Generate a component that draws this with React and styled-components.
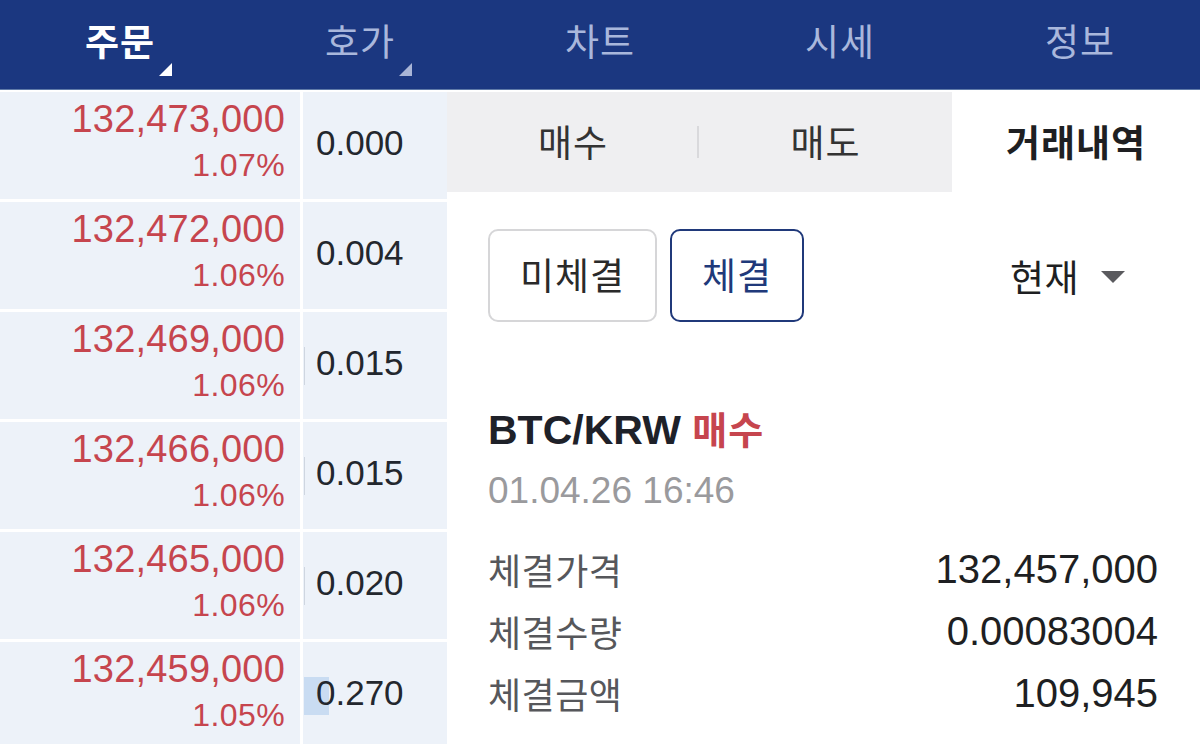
import React from "react"
import styled, { createGlobalStyle } from "styled-components"

const GlobalStyle = createGlobalStyle`
  html, body {
    margin: 0;
    padding: 0;
    background: #fff;
  }
  body {
    font-family: "Liberation Sans", "Noto Sans CJK KR", sans-serif;
    -webkit-font-smoothing: antialiased;
  }
`

const Page = styled.div`
  width: 1200px;
  height: 744px;
  overflow: hidden;
  display: flex;
  flex-direction: column;
  background: #fff;
`

const Nav = styled.nav`
  height: 89px;
  flex-shrink: 0;
  display: grid;
  grid-template-columns: repeat(5, 1fr);
  background: #1b3780;
  border-bottom: 1px solid #5f7aa8;
`

const NavItem = styled.div`
  position: relative;
  display: flex;
  align-items: center;
  justify-content: center;
  padding-bottom: 9px;
  font-size: 37px;
  font-weight: ${({ active }) => (active ? 700 : 400)};
  color: ${({ active }) => (active ? "#ffffff" : "#a9b7dc")};
  letter-spacing: 1px;
`

const NavLabel = styled.span`
  position: relative;
`

const Corner = styled.span`
  position: absolute;
  right: -17px;
  bottom: -9px;
  width: 0;
  height: 0;
  border-left: 13px solid transparent;
  border-bottom: 13px solid ${({ active }) => (active ? "#ffffff" : "#a9b5d6")};
`

const Body = styled.div`
  flex: 1;
  display: flex;
  padding-top: 2px;
`

const OrderBook = styled.div`
  width: 447px;
  flex-shrink: 0;
  display: flex;
  flex-direction: column;
  gap: 3px;
`

const BookRow = styled.div`
  height: 107px;
  flex-shrink: 0;
  display: grid;
  grid-template-columns: 300px 144px;
  gap: 3px;
`

const PriceCell = styled.div`
  background: #edf2f9;
  display: flex;
  flex-direction: column;
  align-items: flex-end;
  padding: 7px 15px 0 0;
  color: #c6454e;
`

const Price = styled.div`
  font-size: 38px;
  line-height: 40px;
  letter-spacing: 0.2px;
`

const Rate = styled.div`
  margin-top: 8px;
  font-size: 32px;
  line-height: 36px;
  letter-spacing: 0.4px;
`

const QtyCell = styled.div`
  position: relative;
  background: #edf2f9;
  display: flex;
  align-items: center;
  padding: 0 0 6px 13px;
  font-size: 35px;
  color: #23272e;
`

const DepthBar = styled.span`
  position: absolute;
  left: 1px;
  top: 50%;
  height: 38px;
  transform: translateY(-50%);
  background: ${({ big }) => (big ? "#c9dcf2" : "#cfd6e0")};
`

const QtyText = styled.span`
  position: relative;
`

const Panel = styled.div`
  flex: 1;
  display: flex;
  flex-direction: column;
`

const Tabs = styled.div`
  height: 100px;
  display: grid;
  grid-template-columns: 252px 253px 1fr;
  background: #efeff1;
`

const Tab = styled.div`
  position: relative;
  display: flex;
  align-items: center;
  justify-content: center;
  padding-bottom: 2px;
  font-size: 37px;
  letter-spacing: 1px;
  font-weight: ${({ active }) => (active ? 700 : 400)};
  color: ${({ active }) => (active ? "#1e1f22" : "#333")};
  background: ${({ active }) => (active ? "#ffffff" : "transparent")};
`

const TabDivider = styled.span`
  position: absolute;
  right: 0;
  top: 34px;
  width: 2px;
  height: 32px;
  background: #d9d9dc;
`

const Content = styled.div`
  padding: 0 42px 0 41px;
  display: flex;
  flex-direction: column;
`

const FilterRow = styled.div`
  margin-top: 37px;
  display: flex;
  align-items: center;
  gap: 13px;
`

const FilterButton = styled.div`
  box-sizing: border-box;
  height: 93px;
  width: ${({ w }) => w}px;
  display: flex;
  align-items: center;
  justify-content: center;
  padding-bottom: 3px;
  border: 2px solid ${({ active }) => (active ? "#20397a" : "#d6d6d8")};
  border-radius: 10px;
  font-size: 37px;
  letter-spacing: 1px;
  color: ${({ active }) => (active ? "#20397a" : "#2a2a2a")};
`

const Period = styled.div`
  margin-left: auto;
  margin-right: 33px;
  display: flex;
  align-items: center;
  gap: 22px;
  font-size: 37px;
  letter-spacing: 0.5px;
  color: #1e1f22;
`

const Caret = styled.span`
  width: 0;
  height: 0;
  margin-top: 2px;
  border-left: 12px solid transparent;
  border-right: 12px solid transparent;
  border-top: 12px solid #5a5a5e;
`

const TradeTitle = styled.div`
  margin-top: 85px;
  font-size: 41px;
  line-height: 46px;
  font-weight: 700;
  color: #1e2129;
`

const Side = styled.span`
  color: #c6454e;
  font-size: 38px;
  letter-spacing: 1px;
`

const TradeTime = styled.div`
  margin-top: 15px;
  font-size: 37px;
  line-height: 44px;
  color: #9a9a9d;
`

const DetailList = styled.div`
  margin-top: 25px;
  display: flex;
  flex-direction: column;
`

const DetailRow = styled.div`
  height: 62px;
  display: flex;
  align-items: center;
  justify-content: space-between;
`

const DetailLabel = styled.span`
  font-size: 36px;
  color: #56575b;
  letter-spacing: 0.5px;
`

const DetailValue = styled.span`
  font-size: 40px;
  color: #1e1f22;
`

const navItems = [
  { label: "주문", active: true, corner: true },
  { label: "호가", corner: true },
  { label: "차트" },
  { label: "시세" },
  { label: "정보" },
]

const book = [
  { price: "132,473,000", rate: "1.07%", qty: "0.000", bar: 0 },
  { price: "132,472,000", rate: "1.06%", qty: "0.004", bar: 0 },
  { price: "132,469,000", rate: "1.06%", qty: "0.015", bar: 1 },
  { price: "132,466,000", rate: "1.06%", qty: "0.015", bar: 1 },
  { price: "132,465,000", rate: "1.06%", qty: "0.020", bar: 1 },
  { price: "132,459,000", rate: "1.05%", qty: "0.270", bar: 25, big: true },
]

const details = [
  { label: "체결가격", value: "132,457,000" },
  { label: "체결수량", value: "0.00083004" },
  { label: "체결금액", value: "109,945" },
]

const App = () => {
  return (
    <Page>
      <GlobalStyle />
      <Nav>
        {navItems.map((item) => (
          <NavItem key={item.label} active={item.active}>
            <NavLabel>
              {item.label}
              {item.corner && <Corner active={item.active} />}
            </NavLabel>
          </NavItem>
        ))}
      </Nav>
      <Body>
        <OrderBook>
          {book.map((row, i) => (
            <BookRow key={i}>
              <PriceCell>
                <Price>{row.price}</Price>
                <Rate>{row.rate}</Rate>
              </PriceCell>
              <QtyCell>
                {row.bar > 0 && <DepthBar big={row.big} style={{ width: row.bar }} />}
                <QtyText>{row.qty}</QtyText>
              </QtyCell>
            </BookRow>
          ))}
        </OrderBook>
        <Panel>
          <Tabs>
            <Tab>
              매수
              <TabDivider />
            </Tab>
            <Tab>매도</Tab>
            <Tab active>거래내역</Tab>
          </Tabs>
          <Content>
            <FilterRow>
              <FilterButton w={169}>미체결</FilterButton>
              <FilterButton w={134} active>체결</FilterButton>
              <Period>
                현재
                <Caret />
              </Period>
            </FilterRow>
            <TradeTitle>
              BTC/KRW <Side>매수</Side>
            </TradeTitle>
            <TradeTime>01.04.26 16:46</TradeTime>
            <DetailList>
              {details.map((d) => (
                <DetailRow key={d.label}>
                  <DetailLabel>{d.label}</DetailLabel>
                  <DetailValue>{d.value}</DetailValue>
                </DetailRow>
              ))}
            </DetailList>
          </Content>
        </Panel>
      </Body>
    </Page>
  )
}

export default App
